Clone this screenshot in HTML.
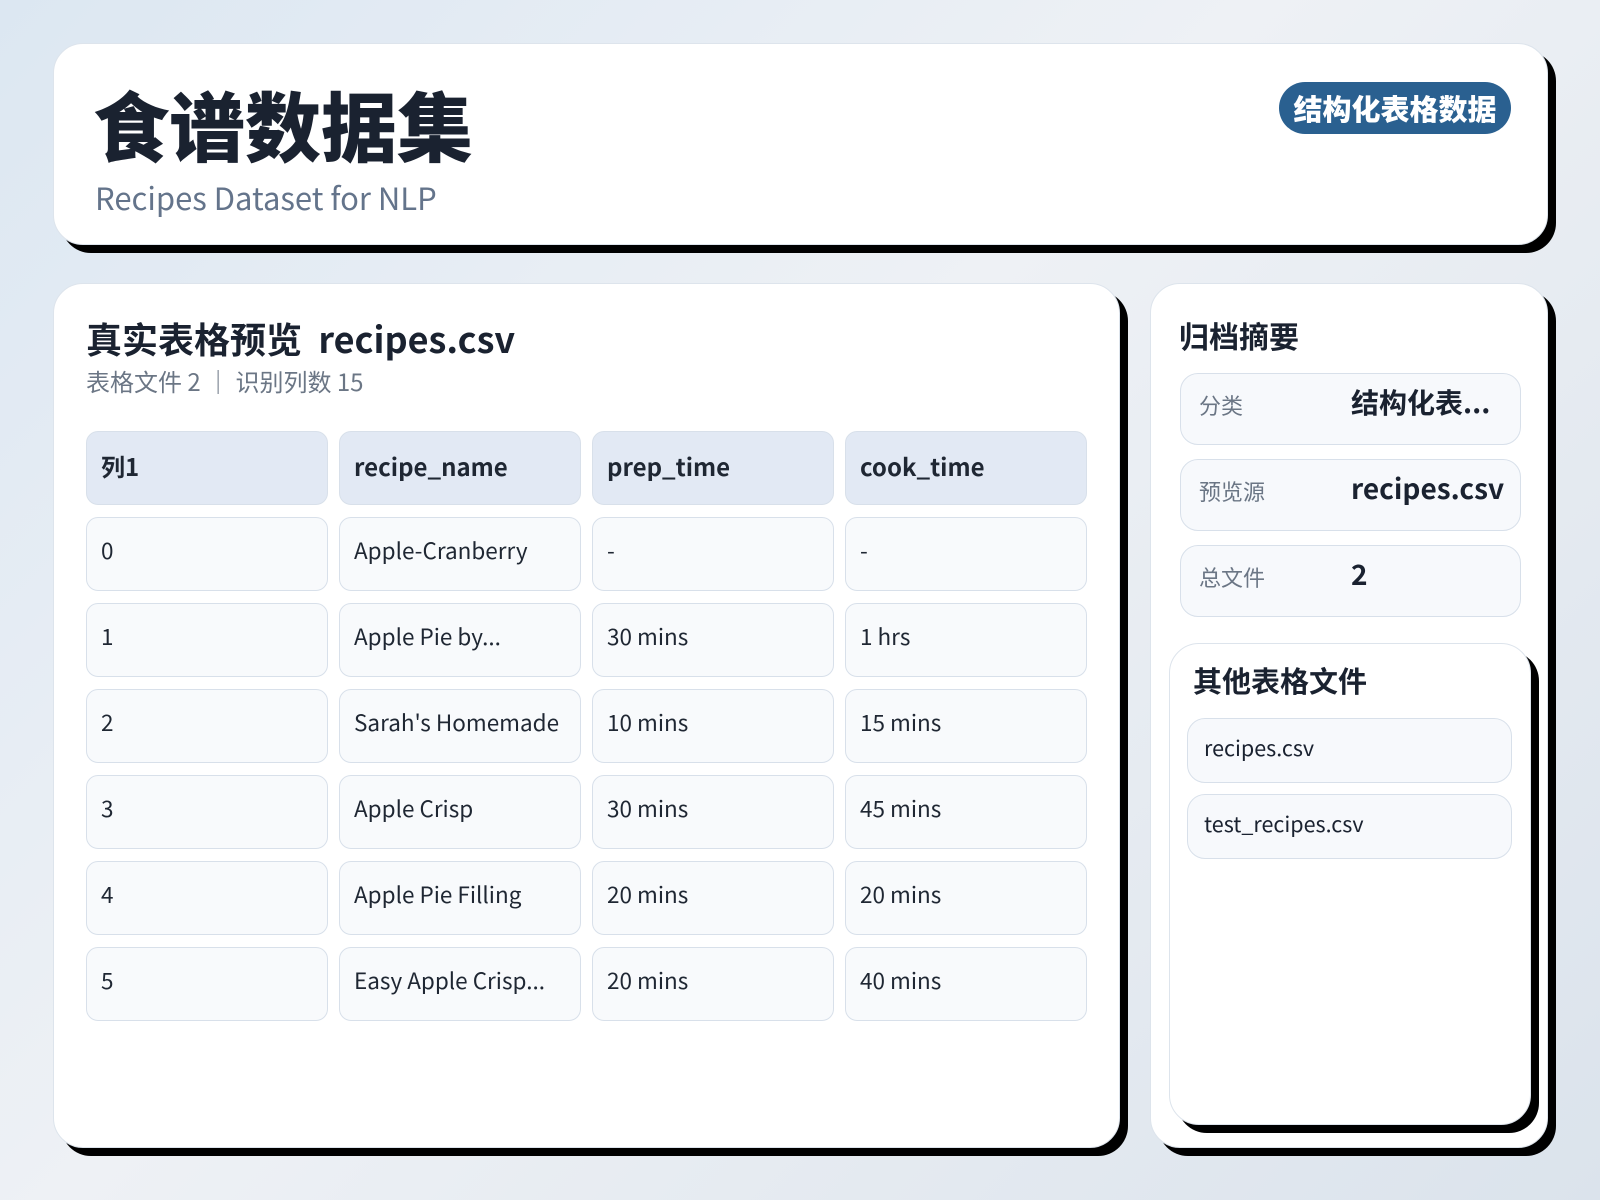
<!DOCTYPE html>
<html><head><meta charset="utf-8"><style>
*{box-sizing:border-box;margin:0;padding:0}
body{width:1600px;height:1200px;overflow:hidden;position:relative;font-family:"Noto Sans CJK SC","Liberation Sans",sans-serif;color:#1a2230;background:linear-gradient(135deg,#dce7f2 0%,#eef1f5 45%,#dbe3ec 100%)}
.card{position:absolute;background:#fff;border:1px solid #dde4ec;border-radius:30px;box-shadow:8px 8px 0 #000}
.abs{position:absolute;white-space:nowrap}
.cell{position:absolute;width:242px;height:74px;border:1px solid #d8e0ea;border-radius:12px;background:#f8fafc;font-size:22.5px;padding-left:14px;line-height:64px;color:#1f2733}
.hd{background:#e2e9f4;font-weight:bold;font-size:24px;line-height:68px}
.row{position:absolute;left:29px;width:341px;height:72px;border:1px solid #d8e0ea;border-radius:18px;background:#f7f9fc}
.lab{position:absolute;left:18px;top:15px;font-size:22px;color:#6b7685}
.val{position:absolute;left:170px;top:8px;font-size:28px;font-weight:bold;color:#1a2230}
.it{position:absolute;left:17px;width:325px;height:65px;border:1px solid #d8e0ea;border-radius:18px;background:#f7f9fc;font-size:21.5px;line-height:58px;padding-left:16px}
</style></head><body>
<div class="card" style="left:53px;top:43px;width:1495px;height:202px">
  <div class="abs" style="left:39px;top:34px;font-size:76px;font-weight:900;line-height:90px">食谱数据集</div>
  <div class="abs" style="left:41px;top:130px;font-size:31px;color:#64748b">Recipes Dataset for NLP</div>
  <div class="abs" style="left:1225px;top:38px;width:232px;height:52px;border-radius:26px;background:#2a6090;color:#fff;font-size:29px;font-weight:900;text-align:center;line-height:52px">结构化表格数据</div>
</div>
<div class="card" style="left:53px;top:283px;width:1067px;height:865px">
  <div class="abs" style="left:32px;top:28px;font-size:36px;font-weight:bold">真实表格预览 &nbsp;recipes.csv</div>
  <div class="abs" style="left:32px;top:79px;font-size:24px;color:#6b7685">表格文件 2 ｜ 识别列数 15</div>
</div>
<div style="position:absolute;left:0;top:0">
<div class="cell hd" style="left:86px;top:431px">列1</div>
<div class="cell hd" style="left:339px;top:431px">recipe_name</div>
<div class="cell hd" style="left:592px;top:431px">prep_time</div>
<div class="cell hd" style="left:845px;top:431px">cook_time</div>

<div class="cell" style="left:86px;top:517px">0</div><div class="cell" style="left:339px;top:517px">Apple-Cranberry</div><div class="cell" style="left:592px;top:517px">-</div><div class="cell" style="left:845px;top:517px">-</div>
<div class="cell" style="left:86px;top:603px">1</div><div class="cell" style="left:339px;top:603px">Apple Pie by...</div><div class="cell" style="left:592px;top:603px">30 mins</div><div class="cell" style="left:845px;top:603px">1 hrs</div>
<div class="cell" style="left:86px;top:689px">2</div><div class="cell" style="left:339px;top:689px">Sarah's Homemade</div><div class="cell" style="left:592px;top:689px">10 mins</div><div class="cell" style="left:845px;top:689px">15 mins</div>
<div class="cell" style="left:86px;top:775px">3</div><div class="cell" style="left:339px;top:775px">Apple Crisp</div><div class="cell" style="left:592px;top:775px">30 mins</div><div class="cell" style="left:845px;top:775px">45 mins</div>
<div class="cell" style="left:86px;top:861px">4</div><div class="cell" style="left:339px;top:861px">Apple Pie Filling</div><div class="cell" style="left:592px;top:861px">20 mins</div><div class="cell" style="left:845px;top:861px">20 mins</div>
<div class="cell" style="left:86px;top:947px">5</div><div class="cell" style="left:339px;top:947px">Easy Apple Crisp...</div><div class="cell" style="left:592px;top:947px">20 mins</div><div class="cell" style="left:845px;top:947px">40 mins</div>
</div>
<div class="card" style="left:1150px;top:283px;width:398px;height:865px">
  <div class="abs" style="left:28px;top:29px;font-size:30px;font-weight:bold">归档摘要</div>
  <div class="row" style="top:89px"><div class="lab">分类</div><div class="val">结构化表...</div></div>
  <div class="row" style="top:175px"><div class="lab">预览源</div><div class="val">recipes.csv</div></div>
  <div class="row" style="top:261px"><div class="lab">总文件</div><div class="val">2</div></div>
  <div class="card" style="left:18px;top:359px;width:362px;height:482px">
    <div class="abs" style="left:23px;top:15px;font-size:29px;font-weight:bold">其他表格文件</div>
    <div class="it" style="top:74px">recipes.csv</div>
    <div class="it" style="top:150px">test_recipes.csv</div>
  </div>
</div>
</body></html>
